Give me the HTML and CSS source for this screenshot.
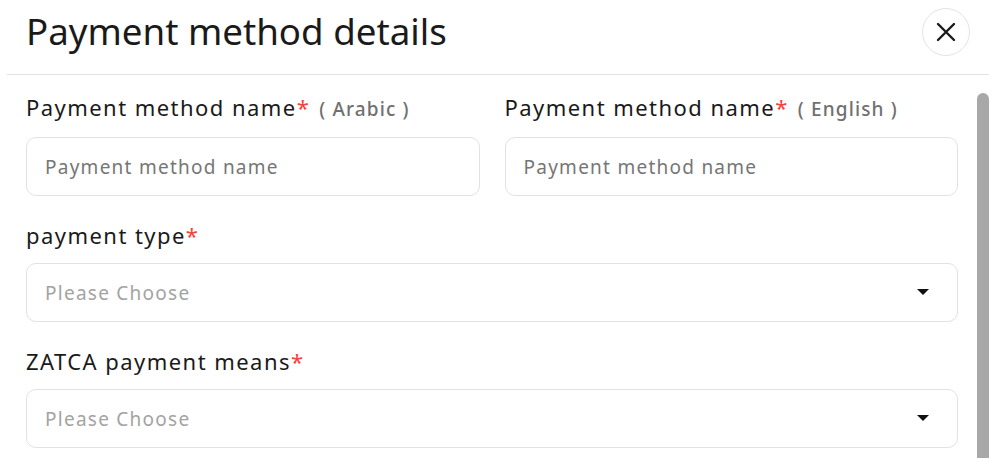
FILE: index.html
```html
<!DOCTYPE html>
<html>
<head>
<meta charset="utf-8">
<link rel="stylesheet" href="styles.css">
</head>
<body>
<div class="modal">
  <div class="modal-header">
    <h1 class="title">Payment method details</h1>
    <button class="close-btn" aria-label="Close">
      <svg width="20" height="20" viewBox="0 0 20 20"><path d="M2 2 L18 18 M18 2 L2 18" stroke="#1a1a1a" stroke-width="2.4" stroke-linecap="round" fill="none"/></svg>
    </button>
  </div>
  <div class="modal-body">
    <div class="form">
      <div class="row two">
        <div class="field">
          <label class="label">Payment method name<span class="req">*</span><span class="lang">( Arabic )</span></label>
          <div class="input"><span class="ph">Payment method name</span></div>
        </div>
        <div class="field">
          <label class="label">Payment method name<span class="req">*</span><span class="lang">( English )</span></label>
          <div class="input"><span class="ph">Payment method name</span></div>
        </div>
      </div>
      <div class="field">
        <label class="label">payment type<span class="req">*</span></label>
        <div class="input select"><span class="ph light">Please Choose</span><span class="caret"></span></div>
      </div>
      <div class="field">
        <label class="label">ZATCA payment means<span class="req">*</span></label>
        <div class="input select"><span class="ph light">Please Choose</span><span class="caret"></span></div>
      </div>
    </div>
    <div class="scrollbar"><div class="thumb"></div></div>
  </div>
</div>
</body>
</html>
```

FILE: styles.css
```css
html, body {
  margin: 0;
  padding: 0;
  background: #fff;
}
body {
  font-family: "Noto Sans", "Open Sans", sans-serif;
  color: #1a1a1a;
  height: 458px;
  overflow: hidden;
}
.modal {
  margin-left: 7px;
  width: 982px;
}
.modal-header {
  height: 75px;
  border-bottom: 1px solid #e3e3e3;
  display: flex;
  align-items: center;
  justify-content: space-between;
  padding: 0 19px;
  box-sizing: border-box;
}
.title {
  margin: 0;
  font-size: 36.7px;
  font-weight: 400;
  line-height: 46px;
  margin-top: -12px;
  letter-spacing: 0;
}
.close-btn {
  width: 48px;
  height: 48px;
  border-radius: 50%;
  border: 1px solid #e4e4e4;
  background: #fff;
  display: flex;
  align-items: center;
  justify-content: center;
  padding: 0;
  margin-top: -10px;
}
.modal-body {
  display: flex;
  gap: 19px;
  padding-left: 19px;
}
.form {
  width: 932px;
  padding-top: 17px;
  display: flex;
  flex-direction: column;
  gap: 24px;
}
.row.two {
  display: grid;
  grid-template-columns: 1fr 1fr;
  gap: 25px;
}
.field {
  display: flex;
  flex-direction: column;
  gap: 13px;
}
.label {
  font-size: 22px;
  line-height: 30px;
  letter-spacing: 0.066em;
  color: #1a1a1a;
}
.req {
  color: #f5413a;
}
.lang {
  font-size: 19px;
  font-weight: 500;
  color: #707070;
  margin-left: 9px;
  letter-spacing: 0.06em;
}
.input {
  height: 59px;
  box-sizing: border-box;
  border: 1px solid #e2e2e2;
  border-radius: 10px;
  display: flex;
  align-items: center;
  padding: 0 28px 0 18px;
  justify-content: space-between;
}
.ph {
  font-size: 19px;
  letter-spacing: 0.066em;
  color: #767676;
}
.ph.light {
  color: #a3a3a3;
}
.caret {
  width: 0;
  height: 0;
  margin-top: -2px;
  border-left: 6px solid transparent;
  border-right: 6px solid transparent;
  border-top: 6px solid #111;
}
.scrollbar {
  width: 12px;
  padding-top: 18px;
}
.thumb {
  width: 12px;
  height: 400px;
  background: #a8a8a8;
  border-radius: 6px 6px 0 0;
}
```
